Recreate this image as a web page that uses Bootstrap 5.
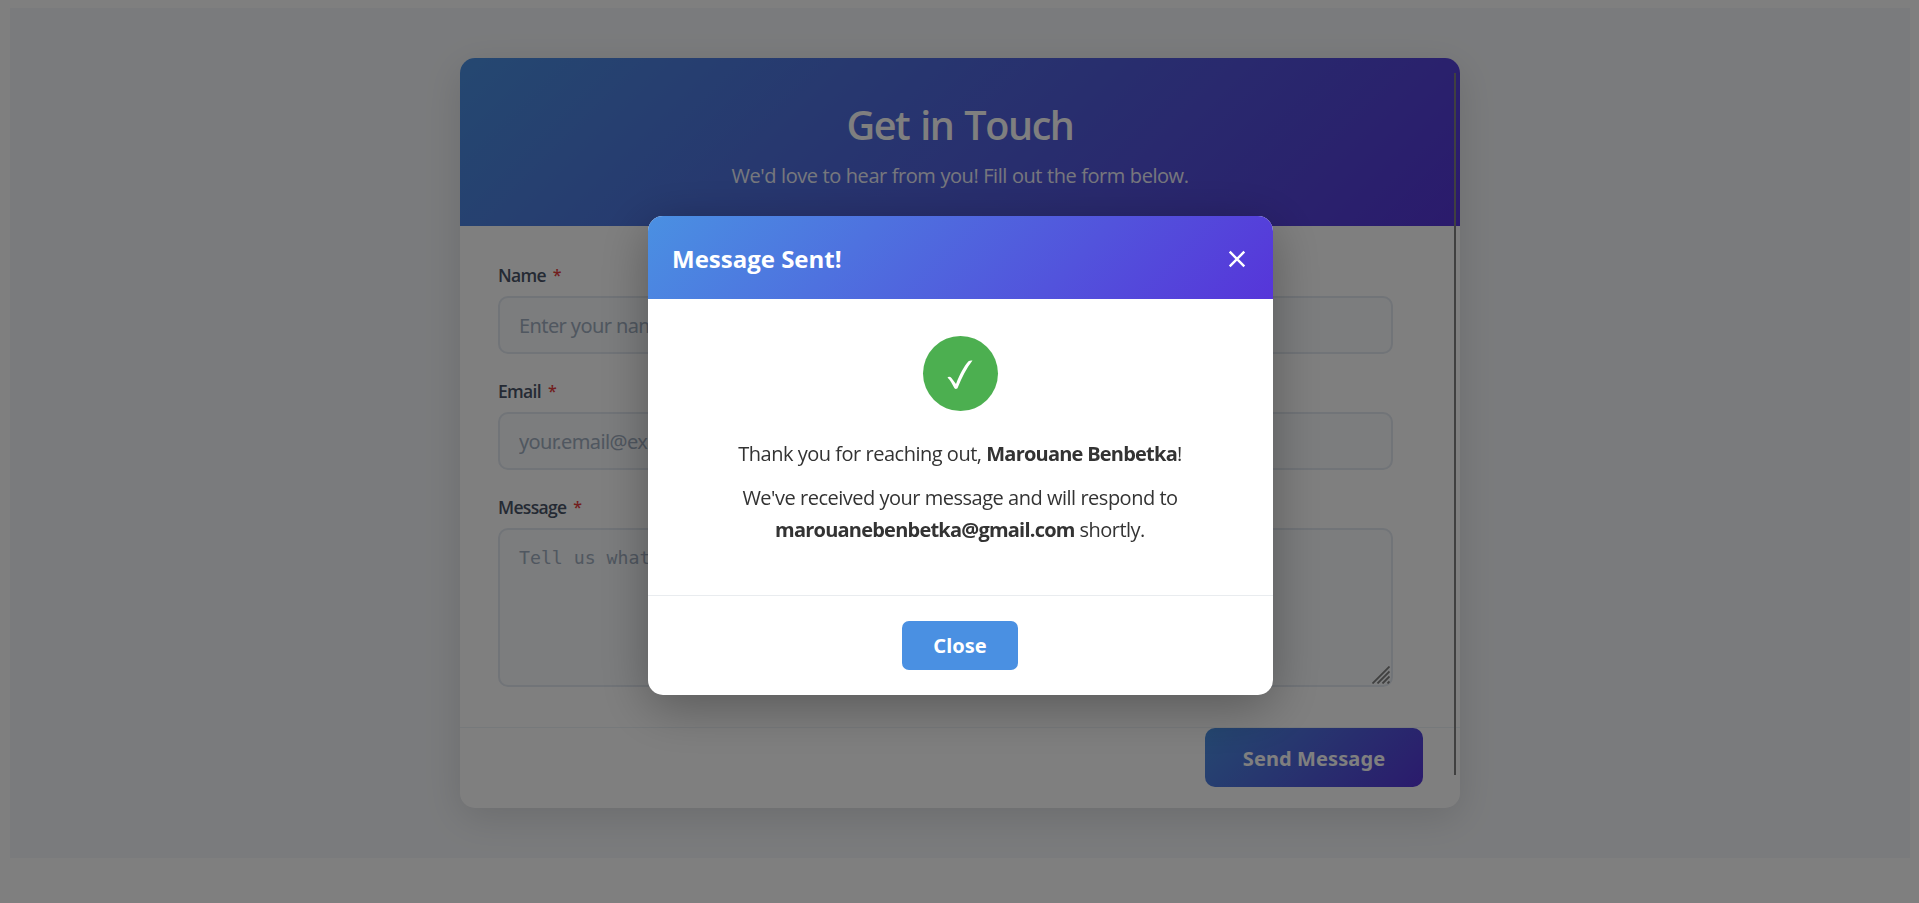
<!DOCTYPE html>
<html lang="en">
<head>
<meta charset="utf-8">
<meta name="viewport" content="width=device-width, initial-scale=1">
<title>Get in Touch</title>
<link href="https://cdn.jsdelivr.net/npm/bootstrap@5.3.0/dist/css/bootstrap.min.css" rel="stylesheet">
<style>
  body { font-family: "Open Sans", "Noto Sans", sans-serif; color: #333; background: #fff; overflow: hidden; }
  .page-area { margin: 8px 9px 0 10px; height: 850px; background: #f5f7fa; }
  .brand-gradient { background: linear-gradient(135deg, #4a90e2 0%, #5635d9 100%); }
  .contact-card { width: 1000px; height: 750px; border: 0; border-radius: 15px; box-shadow: 0 10px 38px rgba(0,0,0,.12); overflow: hidden; }
  .contact-head { height: 168px; padding-top: 43px; }
  .contact-head h1 { font-size: 39.5px; line-height: 48px; font-weight: 600; letter-spacing: -1.4px; word-spacing: 2px; margin: 0 0 11px; }
  .contact-head p { font-size: 20px; line-height: 32px; letter-spacing: -.45px; word-spacing: .25px; opacity: .9; margin: 0; }
  .contact-form { padding: 36px 67px 0 38px; height: 501px; }
  .field-label { font-size: 17.5px; line-height: 27px; font-weight: 600; letter-spacing: -.7px; color: #4a5568; margin: 0 0 7px; display: flex; gap: 7px; }
  .field-label.next-label { margin-top: 24px; }
  .field-label i { font-style: normal; color: #e53e3e; font-size: 16px; }
  .field-box.form-control { height: 58px; border: 2px solid #e2e8f0; border-radius: 10px; background: #f8fafc; padding: 0 19px; font-size: 20px; letter-spacing: -.6px; font-family: "Noto Sans", sans-serif; }
  .field-box::placeholder { color: #a0aec0; opacity: 1; }
  textarea.field-box.form-control { height: 159px; padding: 13px 19px; resize: none; font-family: "DejaVu Sans Mono", monospace; font-size: 18.2px; line-height: 30px; letter-spacing: 0; }
  .grip { right: 3px; bottom: 3px; }
  .contact-foot { border-top: 1px solid #edf2f7; padding-right: 37px; }
  .send-btn { width: 218px; height: 59px; border: 0; border-radius: 10px; color: #fff; font: 700 20px "Noto Sans", sans-serif; letter-spacing: .1px; padding: 2px 0 0; }
  .scroll-thumb { width: 2px; top: 15px; bottom: 33px; right: 4px; background: #808080; }
  .veil { background: rgba(0,0,0,.5); }
  .modal-dialog.sent-dialog { width: 625px; max-width: 625px; margin: 216px auto 0 648px; }
  .modal-content.sent-content { border: 0; border-radius: 15px; height: 479px; overflow: hidden; box-shadow: 0 12px 50px rgba(0,0,0,.3); color: #333; }
  .sent-head.modal-header { height: 83px; padding: 3px 25px 0 24px; border: 0; border-radius: 0; color: #fff; }
  .sent-head h2 { font-size: 24px; font-weight: 700; margin: 0; }
  .sent-body.modal-body { height: 296px; flex: none; padding: 37px 38px 0 37px; font-size: 20px; line-height: 32px; letter-spacing: -.5px; word-spacing: .1px; }
  .sent-body strong { letter-spacing: -.78px; }
  .check-disc { width: 75px; height: 75px; background: #4caf50; margin-bottom: 27px; padding: 3px 1px 0 0; }
  .sent-body p { margin: 0 0 12px; }
  .sent-foot.modal-footer { border-top: 1px solid #e9ecef; padding: 25px 1px 0 0; align-items: flex-start; border-radius: 0; }
  .close-btn { width: 116px; height: 49px; border: 0; border-radius: 7px; background: #4a90e2; color: #fff; font: 700 20px "Noto Sans", sans-serif; margin: 0 !important; }
</style>
</head>
<body>
<main class="page-area d-flex justify-content-center align-items-center">
  <div class="card contact-card position-relative">
    <header class="contact-head brand-gradient text-white text-center">
      <h1>Get in Touch</h1>
      <p>We'd love to hear from you! Fill out the form below.</p>
    </header>
    <form class="contact-form">
      <label class="field-label" for="name">Name<i>*</i></label>
      <input id="name" class="form-control field-box" type="text" placeholder="Enter your name">
      <label class="field-label next-label" for="email">Email<i>*</i></label>
      <input id="email" class="form-control field-box" type="email" placeholder="your.email@example.com">
      <label class="field-label next-label" for="message">Message<i>*</i></label>
      <div class="position-relative">
        <textarea id="message" class="form-control field-box" placeholder="Tell us what you have in mind"></textarea>
        <svg class="grip position-absolute" width="18" height="18" viewBox="0 0 18 18" stroke="#808080" stroke-width="1.800" fill="none"><path d="M.5 17.500 17.500.5M5.500 17.500 17.500 5.500M10.500 17.500 17.500 10.500M15.500 17.500 17.500 15.500"/></svg>
      </div>
    </form>
    <footer class="contact-foot d-flex justify-content-end">
      <button class="send-btn brand-gradient" type="button">Send Message</button>
    </footer>
    <div class="scroll-thumb position-absolute"></div>
  </div>
</main>

<div class="modal d-block veil" tabindex="-1" role="dialog" aria-labelledby="sent-title">
  <div class="modal-dialog sent-dialog">
    <div class="modal-content sent-content">
      <div class="modal-header sent-head brand-gradient">
        <h2 id="sent-title">Message Sent!</h2>
        <svg width="22" height="18" viewBox="0 0 22 18" stroke="#fff" stroke-width="2.400" fill="none"><path d="M3.700 1.700 18.300 16.300M18.300 1.700 3.700 16.300"/></svg>
      </div>
      <div class="modal-body sent-body text-center">
        <div class="check-disc rounded-circle mx-auto d-flex align-items-center justify-content-center">
          <svg width="26" height="30" viewBox="0 0 26 30" fill="#fff"><path d="M.5 17.600C1.500 16.300 3.300 16.600 4.500 18L9 24C12.500 15 17 6 21.500 1.300 22.500.4 24 .3 25.500.500 19.500 8 15 17 10.800 27.500 10.300 29.200 8.300 29.400 7.300 28.100 5 24 3.500 20.500.5 17.600Z"/></svg>
        </div>
        <p>Thank you for reaching out, <strong>Marouane Benbetka</strong>!</p>
        <p>We've received your message and will respond to<br><strong>marouanebenbetka@gmail.com</strong> shortly.</p>
      </div>
      <div class="modal-footer sent-foot justify-content-center">
        <button class="close-btn" type="button">Close</button>
      </div>
    </div>
  </div>
</div>
<script src="https://cdn.jsdelivr.net/npm/bootstrap@5.3.0/dist/js/bootstrap.bundle.min.js"></script>
</body>
</html>
